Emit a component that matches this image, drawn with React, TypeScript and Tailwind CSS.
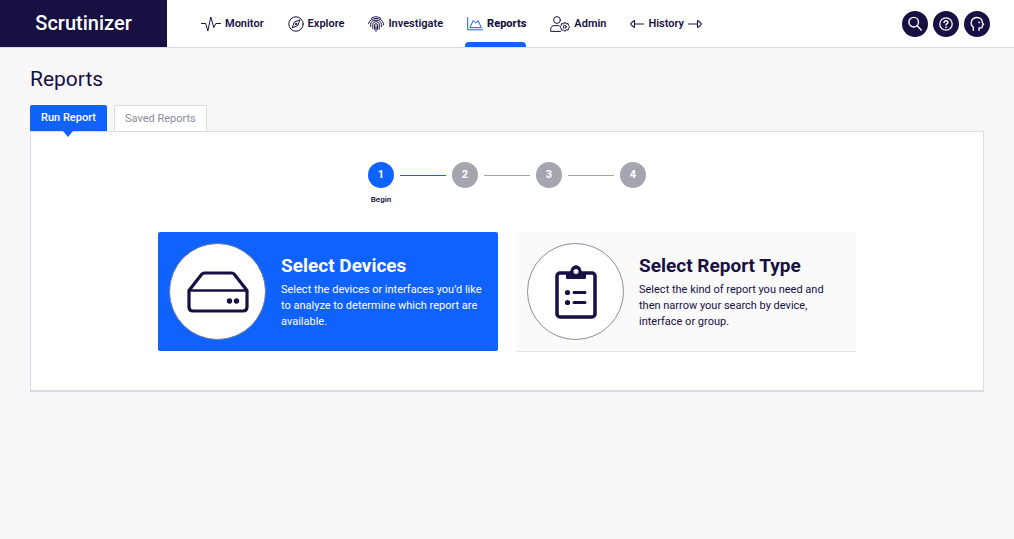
import type { ReactNode } from 'react';
import clsx from 'clsx';

const stroke = {
  fill: 'none',
  stroke: 'currentColor',
  strokeLinecap: 'round',
  strokeLinejoin: 'round',
} as const;

function MonitorIcon() {
  return (
    <svg {...stroke} viewBox="0 0 20 16" className="w-5 h-4" aria-hidden="true">
      <path d="M.5 7.5h4.2L6.8 15l3-14 3 10.5 2-4h4.7" />
    </svg>
  );
}

function ExploreIcon() {
  return (
    <svg {...stroke} viewBox="0 0 16 16" className="size-4" aria-hidden="true">
      <circle cx="8" cy="8" r="7.2" />
      <path d="M11.8 4.2 9.8 9.6 4.2 11.8 6.2 6.4z" />
      <circle cx="8" cy="8" r=".8" />
    </svg>
  );
}

function InvestigateIcon() {
  return (
    <svg {...stroke} viewBox="0 0 16 16" className="size-4" aria-hidden="true">
      <path d="M3.2 2.4C5.5.2 10.5.2 12.8 2.4" />
      <path d="M.6 7.5C1.5.8 14.5.8 15.4 7.5V9" />
      <path d="M2.7 10.5V8.2C2.7 2.8 13.3 2.8 13.3 8.2v2.5" />
      <path d="M4.8 12.5V8.4c0-3.6 6.4-3.6 6.4 0v4.8" />
      <path d="M6.6 13.5V9c0-1.8 2.8-1.8 2.8 0v4.5" />
      <path d="M8 10.5v5" />
    </svg>
  );
}

function ReportsIcon() {
  return (
    <svg {...stroke} viewBox="0 0 16 16" className="size-4 text-[#0f62fe]" aria-hidden="true">
      <path d="M.7 1.5v12.3h14.8" />
      <path d="M3 11.3 6.3 4.5 8.7 7 11.2 4.8 14.2 11.3z" />
    </svg>
  );
}

function AdminIcon() {
  return (
    <svg {...stroke} viewBox="0 0 20 16" className="w-5 h-4" aria-hidden="true">
      <circle cx="7" cy="4" r="3.4" />
      <path d="M10.5 15.4H.7v-2.2C.7 10.8 2.3 9.6 4.2 9.6h4.6" />
      <path d="m14.8 6.3 1.3 1.5 2-.2.4 1.9 1.2 1.3-1.2 1.4-.4 1.9-2-.2-1.3 1.5-1.3-1.5-2 .2-.4-1.9-1.2-1.4 1.2-1.3.4-1.9 2 .2z" />
      <circle cx="14.8" cy="10.8" r="1.5" />
    </svg>
  );
}

function ArrowIcon({ flip = false }: { flip?: boolean }) {
  return (
    <svg {...stroke} viewBox="0 0 14 10" strokeWidth="1.1" className={clsx('w-3.5 h-2.5', flip && 'rotate-180')} aria-hidden="true">
      <path d="M.5 5h9M9.5 2.2Q9.5 1.2 10.4 1.9L13 4.4Q13.5 5 13 5.6L10.4 8.1Q9.5 8.8 9.5 7.8z" />
    </svg>
  );
}

function SearchIcon() {
  return (
    <svg {...stroke} viewBox="0 0 16 16" strokeWidth="1.4" className="size-4" aria-hidden="true">
      <circle cx="6.7" cy="6.2" r="4.8" />
      <path d="m10.2 9.7 4 4.2" />
    </svg>
  );
}

function HelpIcon() {
  return (
    <svg {...stroke} viewBox="0 0 16 16" strokeWidth="1.3" className="size-4" aria-hidden="true">
      <circle cx="8" cy="8" r="6.2" />
      <path d="M6.1 6.6C6.1 4 10 4.2 9.9 6.5 9.8 7.8 8 7.7 8 9.1" strokeWidth="1.5" />
      <path d="M8 11.2v.1" strokeWidth="1.7" />
    </svg>
  );
}

function UserIcon() {
  return (
    <svg {...stroke} viewBox="0 0 16 16" strokeWidth="1.3" className="size-4" aria-hidden="true">
      <path d="M4.3 14.4v-3.3C.8 8.5 1.6 1.6 8 1.5c3.7 0 5.4 2.3 5.3 4.9l1.3 2.2-1.3.6v1.7c0 .8-.8 1-1.6 1H10v2.5" />
      <path d="M10.2 6.3v.1" strokeWidth="1.7" />
    </svg>
  );
}

function DeviceIcon() {
  return (
    <svg {...stroke} viewBox="0 0 62 42" strokeWidth="3.2" className="w-[62px] h-[42px]" aria-hidden="true">
      <path d="M2 19.5 14.5 3.5Q15.7 2 17.5 2h27q1.8 0 3 1.5L60 19.5V36q0 4-4 4H6q-4 0-4-4z" />
      <path d="M2.5 19.5h57" strokeWidth="2.6" />
      <circle cx="42.5" cy="30" r="2.7" fill="currentColor" stroke="none" />
      <circle cx="49.5" cy="30" r="2.7" fill="currentColor" stroke="none" />
    </svg>
  );
}

function ClipboardIcon() {
  return (
    <svg {...stroke} viewBox="0 0 42 54" className="w-[42px] h-[54px]" aria-hidden="true">
      <rect x="2" y="8" width="38" height="44" rx="3" strokeWidth="3.5" />
      <path d="M11 7h4.5c.5-9 10.5-9 11 0H31v5.5q0 1.5-1.5 1.5h-17q-1.5 0-1.5-1.5z" fill="currentColor" stroke="none" />
      <circle cx="21" cy="6.5" r="4" strokeWidth="3" fill="white" />
      <path d="M19 27.5h11M19 37.5h11" strokeWidth="3" />
      <circle cx="12.5" cy="27.5" r="2.6" fill="currentColor" stroke="none" />
      <circle cx="12.5" cy="37.5" r="2.6" fill="currentColor" stroke="none" />
    </svg>
  );
}

const NAV: { label: string; icon: ReactNode; after?: ReactNode; active?: boolean }[] = [
  { label: 'Monitor', icon: <MonitorIcon /> },
  { label: 'Explore', icon: <ExploreIcon /> },
  { label: 'Investigate', icon: <InvestigateIcon /> },
  { label: 'Reports', icon: <ReportsIcon />, active: true },
  { label: 'Admin', icon: <AdminIcon /> },
  { label: 'History', icon: <ArrowIcon flip />, after: <ArrowIcon /> },
];

const ACTIONS = [
  { label: 'Search', icon: <SearchIcon /> },
  { label: 'Help', icon: <HelpIcon /> },
  { label: 'Account', icon: <UserIcon /> },
];

const STEPS = [1, 2, 3, 4];

function Header() {
  return (
    <header className="flex h-12 bg-white border-b border-[#dcdce8]">
      <a
        href="#"
        className="flex w-[167px] shrink-0 items-center justify-center pb-0.5 bg-[#180f42] text-white text-[20px] font-medium"
      >
        Scrutinizer
      </a>
      <nav className="flex gap-6 pl-[34px]">
        {NAV.map(({ label, icon, after, active }) => (
          <a
            key={label}
            href="#"
            className={clsx('relative flex items-center gap-1 text-[11px] leading-4', active ? 'font-extrabold' : 'font-semibold')}
          >
            {icon}
            {label}
            {after}
            {active && <span className="absolute -left-0.5 right-0 bottom-0 h-[5px] rounded-t-sm bg-[#0f62fe]" />}
          </a>
        ))}
      </nav>
      <div className="flex items-center gap-[5px] ml-auto pr-6">
        {ACTIONS.map(({ label, icon }) => (
          <button
            key={label}
            type="button"
            aria-label={label}
            className="flex size-[26px] items-center justify-center rounded-full bg-[#180f42] text-white"
          >
            {icon}
          </button>
        ))}
      </div>
    </header>
  );
}

function Stepper() {
  return (
    <ol className="flex justify-center">
      {STEPS.map((n) => (
        <li key={n} className="flex items-start">
          {n > 1 && (
            <span className={clsx('mx-1.5 mt-[13px] w-[46px] border-t', n === 2 ? 'border-[#0f62fe]' : 'border-[#a5a5b0]')} />
          )}
          <span className="flex w-[26px] flex-col items-center gap-1.5">
            <span
              className={clsx(
                'flex size-[26px] items-center justify-center rounded-full text-[11px] font-bold text-white',
                n === 1 ? 'bg-[#0f62fe]' : 'bg-[#a5a5b0]',
              )}
            >
              {n}
            </span>
            {n === 1 && <span className="text-[8px] leading-3 font-semibold">Begin</span>}
          </span>
        </li>
      ))}
    </ol>
  );
}

function OptionCard({ title, text, icon, selected }: { title: string; text: string; icon: ReactNode; selected?: boolean }) {
  return (
    <button
      type="button"
      className={clsx(
        'flex items-center gap-[15px] rounded-xs py-[11px] pl-[11px] pr-3 text-left',
        selected ? 'bg-[#0f62fe] text-white' : 'bg-[#fafafa] shadow-[0_1px_1px_#dedee4]',
      )}
    >
      <span
        className={clsx(
          'flex size-[97px] shrink-0 items-center justify-center rounded-full border bg-white text-[#180f42]',
          selected ? 'border-[#6c7898]' : 'border-[#8f8ca3]',
        )}
      >
        {icon}
      </span>
      <span className="flex flex-col gap-1">
        <span className="text-[19px] leading-6 font-bold">{title}</span>
        <span className="text-[11px] leading-4">{text}</span>
      </span>
    </button>
  );
}

export default function App() {
  return (
    <div className="min-h-screen bg-[#f7f7f7] font-['Roboto',sans-serif] text-[#180f42]">
      <Header />
      <main className="px-[30px] pt-4">
        <h1 className="text-[21px] leading-[30px]">Reports</h1>
        <div role="tablist" className="flex gap-[7px] mt-[11px] text-[11px] leading-4">
          <button
            type="button"
            role="tab"
            aria-selected="true"
            className="relative h-[26px] rounded-t-xs bg-[#0f62fe] px-[11px] font-medium text-white"
          >
            Run Report
            <span className="absolute top-full left-1/2 -translate-x-1/2 border-x-[5px] border-t-[6px] border-x-transparent border-t-[#0f62fe]" />
          </button>
          <button
            type="button"
            role="tab"
            aria-selected="false"
            className="h-[26px] rounded-t-xs border border-b-0 border-[#dcdce8] bg-white px-2.5 text-[#8b8a9c]"
          >
            Saved Reports
          </button>
        </div>
        <section className="border border-b-2 border-[#dcdce8] bg-white pt-[30px] pb-[39px]">
          <Stepper />
          <div className="grid grid-cols-2 gap-[18px] max-w-[698px] mx-auto mt-[26px]">
            <OptionCard
              selected
              title="Select Devices"
              text="Select the devices or interfaces you’d like to analyze to determine which report are available."
              icon={<DeviceIcon />}
            />
            <OptionCard
              title="Select Report Type"
              text="Select the kind of report you need and then narrow your search by device, interface or group."
              icon={<ClipboardIcon />}
            />
          </div>
        </section>
      </main>
    </div>
  );
}
